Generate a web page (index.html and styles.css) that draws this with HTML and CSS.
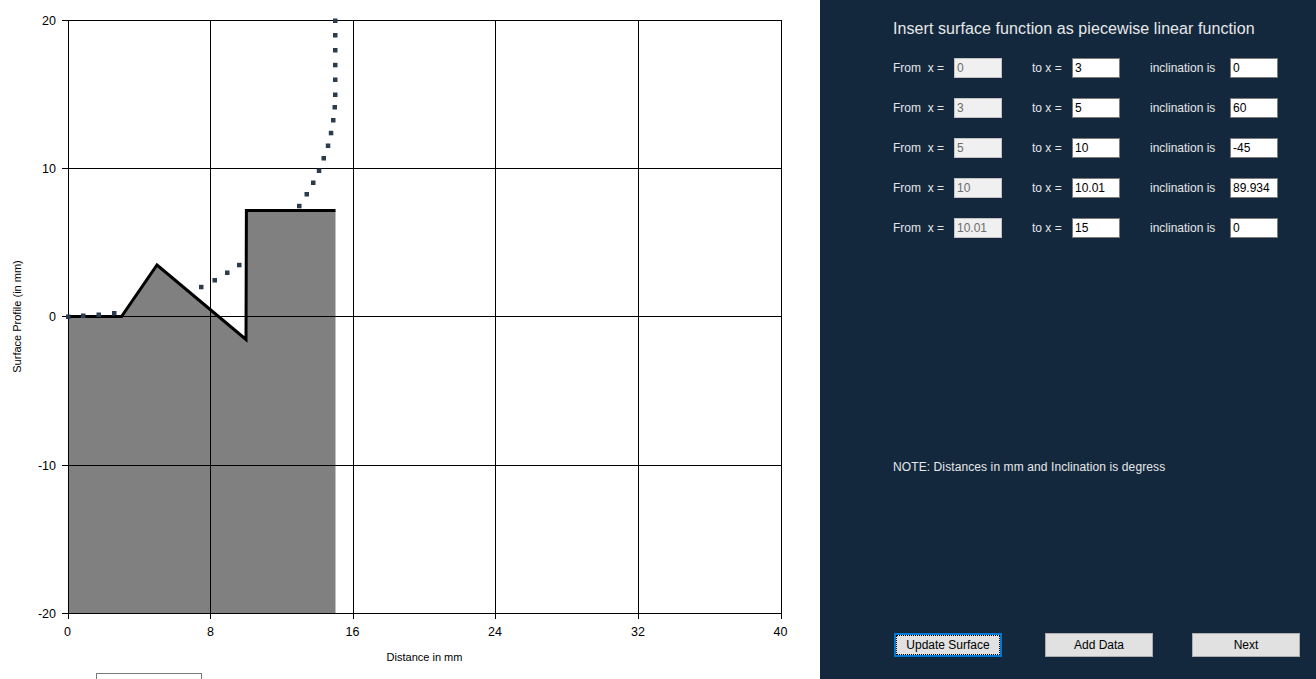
FILE: index.html
```html
<!DOCTYPE html>
<html>
<head>
<meta charset="utf-8">
<title>Surface Profile</title>
<link rel="stylesheet" href="styles.css">
</head>
<body>
<div class="app">
  <div class="chart">
    <svg class="plot" width="820" height="679" viewBox="0 0 820 679" xmlns="http://www.w3.org/2000/svg">
      <polygon class="fill" points="68,613 68,316.5 121.5,316.5 157,265 246,339.5 246.4,210.6 335.5,210.6 335.5,613"/>
      <g class="grid">
        <line x1="68.5" y1="20.5" x2="68.5" y2="619"/>
        <line x1="210.5" y1="20.5" x2="210.5" y2="619"/>
        <line x1="353.5" y1="20.5" x2="353.5" y2="619"/>
        <line x1="495.5" y1="20.5" x2="495.5" y2="619"/>
        <line x1="638.5" y1="20.5" x2="638.5" y2="619"/>
        <line x1="781.5" y1="20.5" x2="781.5" y2="619"/>
        <line x1="62" y1="20.5" x2="781.5" y2="20.5"/>
        <line x1="62" y1="168.5" x2="781.5" y2="168.5"/>
        <line x1="62" y1="316.5" x2="781.5" y2="316.5"/>
        <line x1="62" y1="465.5" x2="781.5" y2="465.5"/>
        <line x1="62" y1="613.5" x2="781.5" y2="613.5"/>
      </g>
      <polyline class="surface" points="68,316.5 121.5,316.5 157,265 246,339.5 246.4,210.6 335.5,210.6"/>
      <g class="dots">
        <rect x="66" y="314.5" width="4.5" height="4.5"/>
        <rect x="81" y="313.5" width="4.5" height="4.5"/>
        <rect x="96.5" y="312.5" width="4.5" height="4.5"/>
        <rect x="112" y="311" width="4.5" height="4.5"/>
        <rect x="199" y="284.8" width="4.5" height="4.5"/>
        <rect x="212.5" y="278" width="4.5" height="4.5"/>
        <rect x="225" y="270.5" width="4.5" height="4.5"/>
        <rect x="237" y="262.8" width="4.5" height="4.5"/>
        <rect x="297" y="203.8" width="4.5" height="4.5"/>
        <rect x="304.5" y="192" width="4.5" height="4.5"/>
        <rect x="311" y="180.5" width="4.5" height="4.5"/>
        <rect x="316.8" y="168.5" width="4.5" height="4.5"/>
        <rect x="321.5" y="156" width="4.5" height="4.5"/>
        <rect x="325.8" y="143.5" width="4.5" height="4.5"/>
        <rect x="328.8" y="130.8" width="4.5" height="4.5"/>
        <rect x="331" y="118" width="4.5" height="4.5"/>
        <rect x="332.5" y="105" width="4.5" height="4.5"/>
        <rect x="333" y="92.5" width="4.5" height="4.5"/>
        <rect x="333" y="77.5" width="4.5" height="4.5"/>
        <rect x="333" y="62.8" width="4.5" height="4.5"/>
        <rect x="333" y="48" width="4.5" height="4.5"/>
        <rect x="333" y="33" width="4.5" height="4.5"/>
        <rect x="333" y="18.5" width="4.5" height="4.5"/>
      </g>
      <g class="ylabels">
        <text x="56" y="25">20</text>
        <text x="56" y="173">10</text>
        <text x="56" y="321">0</text>
        <text x="56" y="470">-10</text>
        <text x="56" y="618">-20</text>
      </g>
      <g class="xlabels">
        <text x="67.5" y="635.5">0</text>
        <text x="210.5" y="635.5">8</text>
        <text x="352.5" y="635.5">16</text>
        <text x="495" y="635.5">24</text>
        <text x="638" y="635.5">32</text>
        <text x="780.5" y="635.5">40</text>
      </g>
      <text class="axis-title" x="424.5" y="661">Distance in mm</text>
      <text class="axis-title" transform="translate(21 316.5) rotate(-90)" x="0" y="0">Surface Profile (in mm)</text>
      <rect class="legend" x="96.5" y="673.5" width="105" height="20"/>
    </svg>
  </div>
  <div class="panel">
    <div class="title">Insert surface function as piecewise linear function</div>
    <div class="rows">
      <div class="row">
        <span class="lbl">From&nbsp; x =</span>
        <input class="box off" type="text" value="0" disabled>
        <span class="lbl to">to x =</span>
        <input class="box" type="text" value="3">
        <span class="lbl inc">inclination is</span>
        <input class="box" type="text" value="0">
      </div>
      <div class="row">
        <span class="lbl">From&nbsp; x =</span>
        <input class="box off" type="text" value="3" disabled>
        <span class="lbl to">to x =</span>
        <input class="box" type="text" value="5">
        <span class="lbl inc">inclination is</span>
        <input class="box" type="text" value="60">
      </div>
      <div class="row">
        <span class="lbl">From&nbsp; x =</span>
        <input class="box off" type="text" value="5" disabled>
        <span class="lbl to">to x =</span>
        <input class="box" type="text" value="10">
        <span class="lbl inc">inclination is</span>
        <input class="box" type="text" value="-45">
      </div>
      <div class="row">
        <span class="lbl">From&nbsp; x =</span>
        <input class="box off" type="text" value="10" disabled>
        <span class="lbl to">to x =</span>
        <input class="box" type="text" value="10.01">
        <span class="lbl inc">inclination is</span>
        <input class="box" type="text" value="89.934">
      </div>
      <div class="row">
        <span class="lbl">From&nbsp; x =</span>
        <input class="box off" type="text" value="10.01" disabled>
        <span class="lbl to">to x =</span>
        <input class="box" type="text" value="15">
        <span class="lbl inc">inclination is</span>
        <input class="box" type="text" value="0">
      </div>
    </div>
    <div class="note">NOTE: Distances in mm and Inclination is degress</div>
    <div class="buttons">
      <button class="btn focus" type="button">Update Surface</button>
      <button class="btn add" type="button">Add Data</button>
      <button class="btn next" type="button">Next</button>
    </div>
  </div>
</div>
</body>
</html>
```
FILE: styles.css
```css
html, body {
  margin: 0;
  padding: 0;
  background: #ffffff;
}
body {
  width: 1316px;
  height: 679px;
  overflow: hidden;
  font-family: "Liberation Sans", Arial, sans-serif;
}
.app {
  display: flex;
  width: 1316px;
  height: 679px;
}
.chart {
  width: 820px;
  height: 679px;
  background: #ffffff;
  flex: none;
}
.plot {
  display: block;
}
.fill {
  fill: #808080;
}
.grid line {
  stroke: #000000;
  stroke-width: 1;
  shape-rendering: crispEdges;
}
.surface {
  fill: none;
  stroke: #000000;
  stroke-width: 3;
  stroke-linejoin: miter;
}
.dots rect {
  fill: #2b3c4e;
}
.ylabels text {
  font-family: "Liberation Sans", Arial, sans-serif;
  font-size: 12.5px;
  text-anchor: end;
  fill: #000000;
}
.xlabels text {
  font-family: "Liberation Sans", Arial, sans-serif;
  font-size: 12.5px;
  text-anchor: middle;
  fill: #000000;
}
.axis-title {
  font-family: "Liberation Sans", Arial, sans-serif;
  font-size: 11px;
  text-anchor: middle;
  fill: #000000;
}
.legend {
  fill: #ffffff;
  stroke: #7a7a7a;
  stroke-width: 1;
  shape-rendering: crispEdges;
}
.panel {
  flex: 1;
  height: 679px;
  background: #14283d;
  color: #e4e6e8;
  padding-left: 73px;
  padding-top: 19px;
  box-sizing: border-box;
}
.title {
  font-size: 16px;
  line-height: 20px;
  height: 20px;
  color: #e6e8ea;
  white-space: nowrap;
  letter-spacing: 0.08px;
}
.rows {
  margin-top: 19px;
  display: flex;
  flex-direction: column;
  gap: 20px;
}
.row {
  display: flex;
  align-items: center;
  height: 20px;
}
.lbl {
  font-size: 12px;
  line-height: 20px;
  white-space: nowrap;
  width: 61px;
}
.lbl.to {
  width: 40px;
  margin-left: 30px;
}
.lbl.inc {
  width: 80px;
  margin-left: 30px;
}
.box {
  width: 48px;
  height: 20px;
  box-sizing: border-box;
  margin: 0;
  padding: 0 0 0 2px;
  border: 1px solid #7a7a7a;
  background: #ffffff;
  color: #000000;
  font-family: "Liberation Sans", Arial, sans-serif;
  font-size: 12px;
  outline: none;
  border-radius: 0;
}
.box.off {
  background: #f0f0f0;
  border-color: #c2c2c2;
  color: #6d6d6d;
  -webkit-text-fill-color: #6d6d6d;
  opacity: 1;
}
.note {
  margin-top: 222px;
  font-size: 12px;
  line-height: 14px;
  color: #e6e8ea;
  white-space: nowrap;
  letter-spacing: 0.1px;
}
.buttons {
  margin-top: 159px;
  display: flex;
}
.btn {
  width: 108px;
  height: 24px;
  box-sizing: border-box;
  margin: 0;
  padding: 0;
  background: #e1e1e1;
  border: 1px solid #adadad;
  border-radius: 0;
  color: #000000;
  font-family: "Liberation Sans", Arial, sans-serif;
  font-size: 12px;
}
.btn.focus {
  margin-left: 1px;
  border: 2px solid #0078d7;
  outline: 1px dotted #000000;
  outline-offset: -3px;
}
.btn.add {
  margin-left: 43px;
}
.btn.next {
  margin-left: 39px;
}
```
